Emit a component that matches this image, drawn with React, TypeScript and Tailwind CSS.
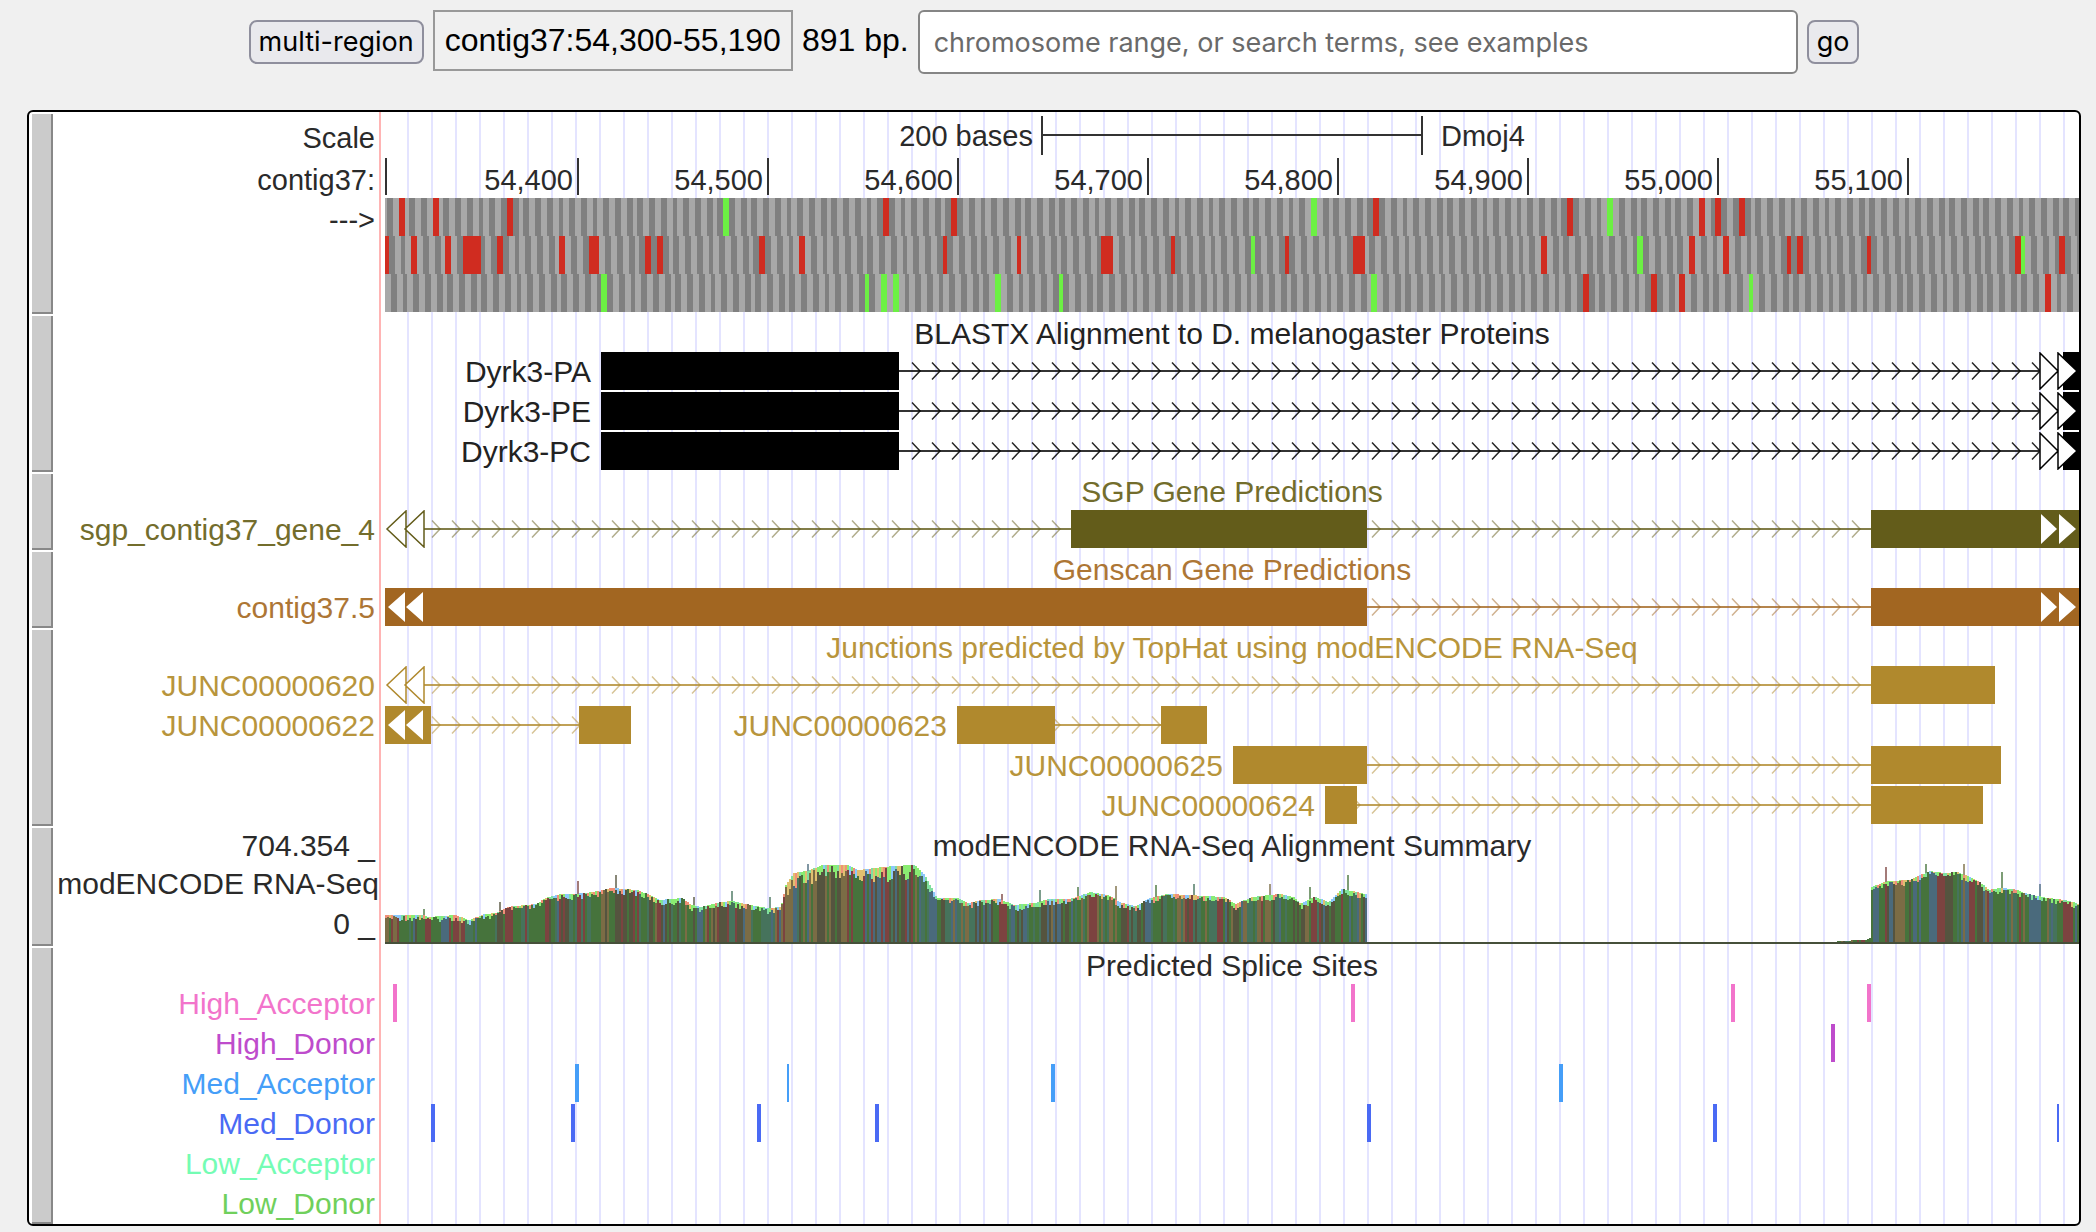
import type { ReactNode } from "react"
import clsx from "clsx"

// The plot is drawn in these units, 891 bases wide
const PLOT = 1694
const BASES = 891

const pct = (x: number) => `${(x / PLOT) * 100}%`
const baseX = (base: number) =>
  Math.min(PLOT, Math.max(0, Math.round((base * PLOT) / BASES / 2) * 2))

type Mark = [base: number, kind: "stop" | "start", length?: number]

type Frame = { offset: number; marks: Mark[] }

const frames: Frame[] = [
  {
    offset: 1,
    marks: [
      [7, "stop"], [25, "stop"], [64, "stop"], [178, "start"], [262, "stop"], [298, "stop"],
      [487, "start"], [520, "stop"], [622, "stop"], [643, "start"], [691, "stop"], [700, "stop"],
      [712, "stop"],
    ],
  },
  {
    offset: 2,
    marks: [
      [-1, "stop"], [14, "stop"], [32, "stop"], [41, "stop", 9], [59, "stop"], [92, "stop"],
      [107, "stop", 6], [137, "stop"], [143, "stop"], [197, "stop"], [218, "stop"], [293, "stop"],
      [332, "stop"], [377, "stop", 6], [413, "stop"], [455, "start"], [473, "stop"],
      [509, "stop", 6], [608, "stop"], [659, "start"], [686, "stop"], [704, "stop"],
      [737, "stop"], [743, "stop"], [779, "stop"], [857, "stop"], [860, "start"], [881, "stop"],
    ],
  },
  {
    offset: 3,
    marks: [
      [114, "start"], [252, "start"], [261, "start"], [267, "start"], [321, "start"],
      [354, "start"], [519, "start"], [630, "stop"], [666, "stop"], [681, "stop"],
      [717, "start"], [873, "stop"],
    ],
  },
]

const ticks = [
  { x: 192, label: "54,400" },
  { x: 382, label: "54,500" },
  { x: 572, label: "54,600" },
  { x: 762, label: "54,700" },
  { x: 952, label: "54,800" },
  { x: 1142, label: "54,900" },
  { x: 1332, label: "55,000" },
  { x: 1522, label: "55,100" },
]

type Cap = "open-left" | "solid-left" | "open-right" | "solid-right"

type Feature = {
  label?: string
  labelInPlot?: boolean
  exons: [number, number][]
  introns: [number, number][]
  caps?: Cap[]
}

const dyrk = (label: string): Feature => ({
  label,
  labelInPlot: true,
  exons: [[216, 514], [1678, 1694]],
  introns: [[514, 1654]],
  caps: ["open-right"],
})

const blastx: Feature[][] = [[dyrk("Dyrk3-PA")], [dyrk("Dyrk3-PE")], [dyrk("Dyrk3-PC")]]

const sgp: Feature[][] = [
  [
    {
      label: "sgp_contig37_gene_4",
      exons: [[686, 982], [1486, 1694]],
      introns: [[39, 686], [982, 1486]],
      caps: ["open-left", "solid-right"],
    },
  ],
]

const genscan: Feature[][] = [
  [
    {
      label: "contig37.5",
      exons: [[0, 982], [1486, 1694]],
      introns: [[982, 1486]],
      caps: ["solid-left", "solid-right"],
    },
  ],
]

const junctions: Feature[][] = [
  [{ label: "JUNC00000620", exons: [[1486, 1610]], introns: [[39, 1486]], caps: ["open-left"] }],
  [
    { label: "JUNC00000622", exons: [[0, 46], [194, 246]], introns: [[46, 194]], caps: ["solid-left"] },
    { label: "JUNC00000623", labelInPlot: true, exons: [[572, 670], [776, 822]], introns: [[670, 776]] },
  ],
  [{ label: "JUNC00000625", labelInPlot: true, exons: [[848, 982], [1486, 1616]], introns: [[982, 1486]] }],
  [{ label: "JUNC00000624", labelInPlot: true, exons: [[940, 972], [1486, 1598]], introns: [[972, 1486]] }],
]

const spliceSites: { label: string; color: string; sites: [x: number, width: number][] }[] = [
  { label: "High_Acceptor", color: "text-[#f274cb]", sites: [[8, 4], [966, 4], [1346, 4], [1482, 4]] },
  { label: "High_Donor", color: "text-[#be4ccc]", sites: [[1446, 4]] },
  { label: "Med_Acceptor", color: "text-[#459ef8]", sites: [[190, 4], [402, 2], [666, 4], [1174, 4]] },
  {
    label: "Med_Donor",
    color: "text-[#4a6af4]",
    sites: [[46, 4], [186, 4], [372, 4], [490, 4], [982, 4], [1328, 4], [1672, 2]],
  },
  { label: "Low_Acceptor", color: "text-[#74fcb4]", sites: [] },
  { label: "Low_Donor", color: "text-[#70d05c]", sites: [] },
]

// Read depth: [x, height] knots, joined by straight lines
const depth: [number, number][] = [
  [0, 28], [39, 28], [42, 26], [71, 28], [84, 23], [100, 29], [112, 30], [122, 36], [151, 39],
  [163, 46], [176, 49], [189, 49], [208, 51], [227, 55], [253, 53], [269, 46], [275, 43],
  [297, 45], [307, 38], [316, 36], [336, 41], [348, 42], [361, 39], [371, 37], [383, 35],
  [396, 36], [401, 58], [409, 70], [422, 72], [438, 78], [463, 78], [473, 73], [482, 74],
  [508, 77], [530, 78], [540, 68], [552, 45], [572, 45], [584, 40], [597, 43], [615, 44],
  [629, 38], [650, 40], [664, 44], [685, 44], [706, 51], [723, 48], [737, 40], [751, 37],
  [765, 45], [783, 49], [804, 48], [839, 46], [851, 39], [867, 46], [895, 49], [909, 46],
  [916, 39], [930, 46], [944, 41], [957, 54], [981, 49], [982, 0], [1450, 0], [1452, 2],
  [1480, 3], [1486, 5], [1487, 56], [1503, 62], [1524, 63], [1545, 72], [1559, 70], [1573, 71],
  [1594, 62], [1604, 53], [1615, 55], [1629, 54], [1643, 49], [1663, 45], [1681, 43], [1694, 39],
]

const spikes: Record<number, number> = {
  38: 34, 114: 41, 192: 62, 230: 68, 308: 46, 346: 52, 384: 46, 422: 79, 616: 49, 654: 53,
  692: 56, 730: 57, 770: 58, 808: 59, 884: 59, 924: 56, 962: 68, 1500: 76, 1540: 79, 1578: 79,
  1616: 71, 1654: 59,
}

const bodyFills = ["#46733c", "#7c4340", "#4a6a7c", "#46733c", "#7b6c45", "#46735c", "#55543f"]
const tipFills = ["#8aec72", "#f09078", "#8cc8fa", "#8aec72", "#e0c070", "#80e0a0"]

function depthAt(x: number) {
  const i = depth.findIndex(([kx]) => kx > x)
  if (i < 1) return depth[depth.length - 1][1]
  const [x0, y0] = depth[i - 1]
  const [x1, y1] = depth[i]
  return y0 + ((y1 - y0) * (x - x0)) / (x1 - x0)
}

function noise(n: number) {
  const v = Math.sin(n * 12.9898) * 43758.5453
  return v - Math.floor(v)
}

const depthBars = Array.from({ length: PLOT / 2 }, (_, i) => {
  const x = i * 2
  const h = Math.round(depthAt(x + 1))
  const maxTip = x > 400 && x < 545 ? 15 : 6
  // neighbouring bars often share a colour
  const group = noise(i + 7) > 0.5 ? i : Math.floor(i / 4) * 4
  return {
    x,
    h,
    tip: h > 5 ? Math.round(noise(i + 3) * maxTip) : 0,
    body: bodyFills[Math.floor(noise(group + 40) * bodyFills.length)],
    tipFill: tipFills[Math.floor(noise(i + 900) * tipFills.length)],
    spike: spikes[x],
  }
})

function Plot({ height, children }: { height: number; children: ReactNode }) {
  return (
    <svg
      viewBox={`0 0 ${PLOT} ${height}`}
      preserveAspectRatio="none"
      className="block w-full"
      style={{ height }}
      aria-hidden="true"
    >
      {children}
    </svg>
  )
}

function Track({
  name,
  labels,
  className,
  children,
}: {
  name: string
  labels: ReactNode
  className?: string
  children: ReactNode
}) {
  return (
    <section className={clsx("flex", className)} aria-label={name}>
      <button
        type="button"
        aria-label={`Configure ${name}`}
        className="mt-0.5 ml-[3px] w-[21px] shrink-0 border-r-2 border-b-2 border-[#888888] bg-[#cbcbcb]"
      />
      <div className="w-[326px] shrink-0 text-right whitespace-nowrap">{labels}</div>
      <div className="min-w-0 flex-1 border-l-2 border-[#ffb4b4] pl-1">
        <div className="relative h-full bg-[repeating-linear-gradient(to_right,transparent_0_22px,#e4e4ff_22px_24px)]">
          {children}
        </div>
      </div>
    </section>
  )
}

function Title({ children }: { children: ReactNode }) {
  return <h2 className="h-[38px] text-center whitespace-nowrap">{children}</h2>
}

function Chevrons({ from, to }: { from: number; to: number }) {
  let d = ""
  for (let tip = 55; tip - 6 < to; tip += 20) {
    if (tip > from + 2) d += `M${tip - 8} 10.5L${tip} 19L${tip - 8} 27.5`
  }
  return <path d={d} fill="none" stroke="currentColor" strokeWidth={1.5} />
}

const capPaths: Record<Cap, string> = {
  "open-left": "M21 1V37L2 19ZM39 1V37L20 19Z",
  "solid-left": "M20 4V34L3 19ZM38 4V34L21 19Z",
  "open-right": "M1655 1V37L1673 19ZM1673 1V37L1692 19Z",
  "solid-right": "M1656 4V34L1672 19ZM1674 4V34L1691 19Z",
}

function FeatureShape({ feature, faint }: { feature: Feature; faint: boolean }) {
  return (
    <g>
      {feature.introns.map(([from, to]) => (
        <g key={from}>
          <rect x={from} y={18} width={to - from} height={2} fill="currentColor" opacity={0.8} />
          <g opacity={faint ? 0.5 : 0.85}>
            <Chevrons from={from} to={to} />
          </g>
        </g>
      ))}
      {feature.exons.map(([from, to]) => (
        <rect key={from} x={from} y={0} width={to - from} height={38} fill="currentColor" />
      ))}
      {feature.caps?.map((cap) => (
        <path
          key={cap}
          d={capPaths[cap]}
          fill="#ffffff"
          stroke={cap.startsWith("open") ? "currentColor" : "none"}
          strokeWidth={1.5}
        />
      ))}
    </g>
  )
}

function GeneTrack({
  name,
  rows,
  textColor,
  shapeColor,
  faint = true,
}: {
  name: string
  rows: Feature[][]
  textColor: string
  shapeColor: string
  faint?: boolean
}) {
  return (
    <Track
      name={name}
      className={textColor}
      labels={
        <div className="pt-[38px] pr-1">
          {rows.map((row, i) => (
            <div key={i} className="h-10">
              {row.find((f) => !f.labelInPlot)?.label}
            </div>
          ))}
        </div>
      }
    >
      <Title>{name}</Title>
      {rows.map((row, i) => (
        <div key={i} className="relative h-10">
          <div className={shapeColor}>
            <Plot height={38}>
              {row.map((feature) => (
                <FeatureShape key={feature.label} feature={feature} faint={faint} />
              ))}
            </Plot>
          </div>
          {row
            .filter((f) => f.labelInPlot)
            .map((f) => (
              <span
                key={f.label}
                className="absolute top-0 pr-2.5 whitespace-nowrap"
                style={{ right: pct(PLOT - f.exons[0][0]) }}
              >
                {f.label}
              </span>
            ))}
        </div>
      ))}
    </Track>
  )
}

function CodonRow({ frame, y }: { frame: Frame; y: number }) {
  const codons = []
  for (let i = 0, base = frame.offset - 3; base < BASES; i++, base += 3) {
    const x = baseX(base)
    codons.push(
      <rect key={i} x={x} y={y} width={baseX(base + 3) - x} height={38} fill={i % 2 ? "#808080" : "#a8a8a8"} />,
    )
  }
  return (
    <g>
      {codons}
      {frame.marks.map(([base, kind, length = 3]) => (
        <rect
          key={base}
          x={baseX(base)}
          y={y}
          width={baseX(base + length) - baseX(base)}
          height={38}
          fill={kind === "stop" ? "#d02c20" : "#6cf044"}
        />
      ))}
    </g>
  )
}

function RulerTrack() {
  return (
    <Track
      name="Base position"
      className="text-[29px] text-[#2a2a2a]"
      labels={
        <div className="pt-1.5 pr-1">
          <div className="h-[42px]">Scale</div>
          <div className="h-10">contig37:</div>
          <div className="h-10">---&gt;</div>
        </div>
      }
    >
      <Plot height={202}>
        <g fill="#333333">
          <rect x={656} y={4} width={2} height={39} />
          <rect x={1036} y={4} width={2} height={39} />
          <rect x={656} y={22} width={382} height={2} />
          <rect x={0} y={46} width={2} height={37} />
          {ticks.map((tick) => (
            <rect key={tick.x} x={tick.x} y={46} width={2} height={37} />
          ))}
        </g>
        {frames.map((frame, i) => (
          <CodonRow key={frame.offset} frame={frame} y={86 + i * 38} />
        ))}
      </Plot>
      <span className="absolute top-1 pr-2 whitespace-nowrap" style={{ right: pct(PLOT - 656) }}>
        200 bases
      </span>
      <span className="absolute top-1 pl-[18px]" style={{ left: pct(1038) }}>
        Dmoj4
      </span>
      {ticks.map((tick) => (
        <span key={tick.x} className="absolute top-12 pr-1" style={{ right: pct(PLOT - tick.x) }}>
          {tick.label}
        </span>
      ))}
    </Track>
  )
}

function DepthTrack() {
  return (
    <Track
      name="modENCODE RNA-Seq Alignment Summary"
      className="text-[#2a2a2a]"
      labels={
        <>
          <div className="h-[38px] pr-1">704.354 _</div>
          <div className="h-10">modENCODE RNA-Seq</div>
          <div className="h-10 pr-1">0 _</div>
        </>
      }
    >
      <Title>modENCODE RNA-Seq Alignment Summary</Title>
      <Plot height={82}>
        {depthBars.map((bar) => (
          <g key={bar.x}>
            {bar.spike && (
              <rect x={bar.x} y={79 - bar.spike} width={2} height={bar.spike} fill={bar.body} opacity={0.7} />
            )}
            <rect x={bar.x} y={79 - bar.h} width={2} height={bar.h} fill={bar.tipFill} />
            <rect x={bar.x} y={79 - bar.h + bar.tip} width={2} height={bar.h - bar.tip} fill={bar.body} />
          </g>
        ))}
        <rect x={0} y={78} width={PLOT} height={2} fill="#46503a" />
      </Plot>
    </Track>
  )
}

function SpliceTrack() {
  return (
    <Track
      name="Predicted Splice Sites"
      className="text-[#2a2a2a]"
      labels={
        <div className="pt-[38px] pr-1">
          {spliceSites.map((row) => (
            <div key={row.label} className={clsx("h-10", row.color)}>
              {row.label}
            </div>
          ))}
        </div>
      }
    >
      <Title>Predicted Splice Sites</Title>
      {spliceSites.map((row) => (
        <div key={row.label} className={clsx("h-10", row.color)}>
          <Plot height={38}>
            {row.sites.map(([x, width]) => (
              <rect key={x} x={x} y={0} width={width} height={38} fill="currentColor" />
            ))}
          </Plot>
        </div>
      ))}
    </Track>
  )
}

function PositionBar() {
  const button =
    "h-11 shrink-0 rounded-lg border-2 border-[#8f8f9d] bg-[#e9e9ed] px-2 font-['Inter',sans-serif] text-[27px] leading-9 text-black"

  return (
    <form className="flex items-center justify-center gap-[9px]" onSubmit={(event) => event.preventDefault()}>
      <button type="button" className={button}>
        multi-region
      </button>
      <div className="h-[61px] shrink-0 self-start border-2 border-[#999999] px-2.5 text-[32px] leading-[57px]">
        contig37:54,300-55,190
      </div>
      <div className="h-[61px] shrink-0 self-start text-[32px] leading-[61px]">891 bp.</div>
      <input
        type="text"
        aria-label="Position or search term"
        placeholder="chromosome range, or search terms, see examples"
        className="h-16 w-[880px] min-w-0 rounded-md border-2 border-[#858585] bg-white px-3.5 font-['Inter',sans-serif] text-[27px] placeholder:text-[#6a6a6a]"
      />
      <button type="submit" className={button}>
        go
      </button>
    </form>
  )
}

export default function App() {
  return (
    <div className="min-h-screen bg-[#f0f0f0] pt-2.5 pr-[15px] pb-1.5 pl-[27px] font-['Liberation_Sans',Arial,sans-serif] text-black">
      <PositionBar />
      <main className="mt-9 overflow-hidden rounded-md border-2 border-black bg-white text-[30px] leading-10">
        <RulerTrack />
        <GeneTrack
          name="BLASTX Alignment to D. melanogaster Proteins"
          rows={blastx}
          textColor="text-[#222222]"
          shapeColor="text-black"
          faint={false}
        />
        <GeneTrack
          name="SGP Gene Predictions"
          rows={sgp}
          textColor="text-[#736d2c]"
          shapeColor="text-[#635c1a]"
        />
        <GeneTrack
          name="Genscan Gene Predictions"
          rows={genscan}
          textColor="text-[#ad7635]"
          shapeColor="text-[#a26621]"
        />
        <GeneTrack
          name="Junctions predicted by TopHat using modENCODE RNA-Seq"
          rows={junctions}
          textColor="text-[#b8953c]"
          shapeColor="text-[#b0892d]"
        />
        <DepthTrack />
        <SpliceTrack />
      </main>
    </div>
  )
}
